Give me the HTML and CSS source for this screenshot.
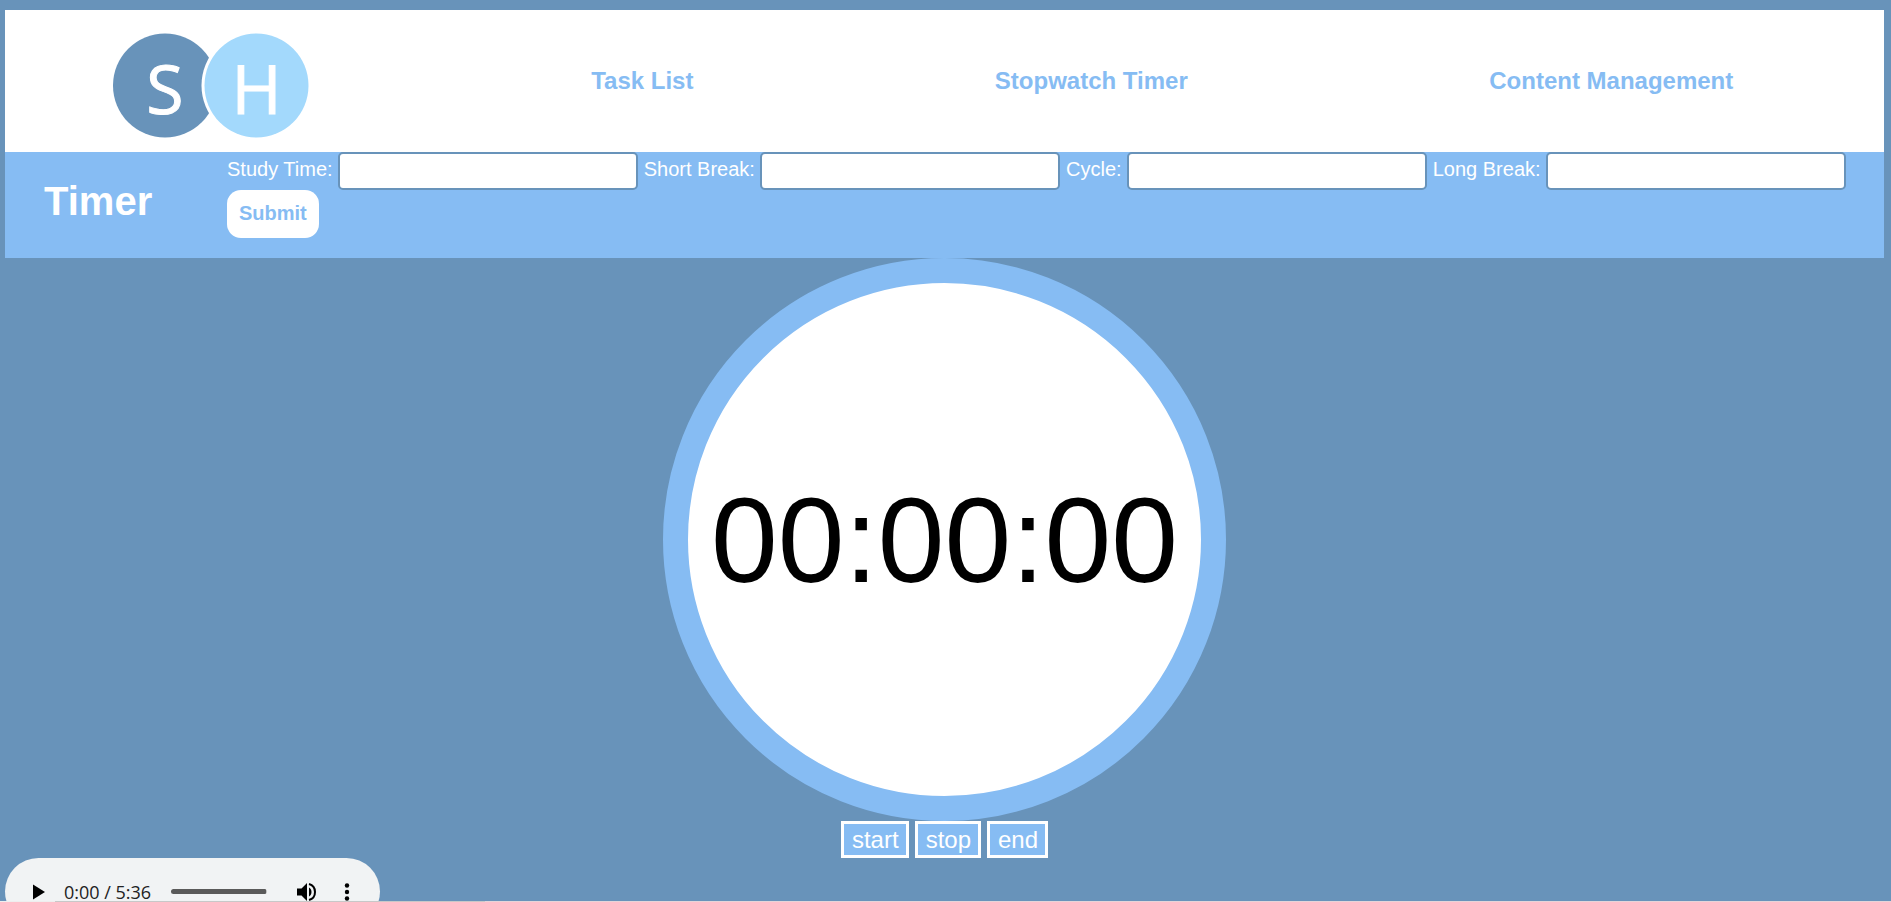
FILE: index.html
```html
<!DOCTYPE html>
<html lang="en">
<head>
<meta charset="utf-8">
<title>Timer</title>
<link rel="stylesheet" href="styles.css">
</head>
<body>
<header class="site-header">
  <svg class="logo" viewBox="0 0 196 142" role="img" aria-label="SH">
    <circle cx="52" cy="75.500" r="52" fill="#6893ba"/>
    <circle cx="143.500" cy="75.500" r="55" fill="#fff"/>
    <circle cx="143.500" cy="75.500" r="52" fill="#a3d9fc"/>
    <text class="logo-letter" x="52" y="104">S</text>
    <text class="logo-letter" x="143.500" y="104">H</text>
  </svg>
  <a class="nav-link" href="#tasks">Task List</a>
  <a class="nav-link" href="#timer">Stopwatch Timer</a>
  <a class="nav-link" href="#content">Content Management</a>
</header>
<section class="settings">
  <h1 class="title">Timer</h1>
  <form class="settings-form">
    <label for="study">Study Time:</label>
    <input class="field" id="study" type="text">
    <label for="short">Short Break:</label>
    <input class="field" id="short" type="text">
    <label for="cycle">Cycle:</label>
    <input class="field" id="cycle" type="text">
    <label for="long">Long Break:</label>
    <input class="field" id="long" type="text">
    <button class="submit" type="button">Submit</button>
  </form>
</section>
<main class="clock">
  <div class="dial"><span>00:00:00</span></div>
  <div class="controls">
    <button class="control" type="button">start</button>
    <button class="control" type="button">stop</button>
    <button class="control" type="button">end</button>
  </div>
</main>
<div class="player">
  <button class="icon-button" type="button" aria-label="Play">
    <svg width="12" height="16" viewBox="0 0 12 16"><path d="M0 .5v15L12 8z"/></svg>
  </button>
  <span class="time">0:00 / 5:36</span>
  <input class="seek" type="range" min="0" max="336" value="0" aria-label="Seek">
  <button class="icon-button volume" type="button" aria-label="Volume">
    <svg width="20" height="20" viewBox="0 0 20 20"><path d="M0 6.500v7h4.500L10 19V1L4.500 6.500z"/><path d="M12 5.500v9c1.500-.8 2.500-2.500 2.500-4.500S13.500 6.300 12 5.500z"/><path d="M12 2c3.700 1 6 4.300 6 8s-2.300 7-6 8" fill="none" stroke="#000" stroke-width="2"/></svg>
  </button>
  <button class="icon-button" type="button" aria-label="More options">
    <svg width="6" height="18" viewBox="0 0 6 18"><circle cx="3" cy="2.500" r="2.200"/><circle cx="3" cy="9" r="2.200"/><circle cx="3" cy="15.500" r="2.200"/></svg>
  </button>
</div>
</body>
</html>
```

FILE: styles.css
```css
html {
  background: #6893ba;
}

body {
  box-sizing: border-box;
  height: 100vh;
  margin: 0;
  padding: 10px 7px 0 5px;
  overflow: hidden;
  font-family: Arial, "Liberation Sans", sans-serif;
  font-size: 20px;
}

body::after {
  content: "";
  position: fixed;
  inset: auto 0 0 0;
  height: 1px;
  background: linear-gradient(90deg, #eee 55px, #c8c8c8 55px 485px, #e6d4d8 485px);
}

button {
  font-family: inherit;
}

.site-header {
  display: flex;
  align-items: center;
  justify-content: space-around;
  background: #fff;
}

.logo {
  width: 196px;
  margin: 0 -19px 0 -43px;
}

.logo-letter {
  font-family: "Open Sans", sans-serif;
  font-size: 68px;
  text-anchor: middle;
  fill: #fff;
  stroke: #fff;
  stroke-width: 1px;
}

.nav-link {
  color: #86bcf3;
  font-size: 24px;
  font-weight: bold;
  line-height: 28px;
  text-decoration: none;
}

.settings {
  display: flex;
  align-items: flex-start;
  background: #86bcf3;
  color: #fff;
}

.title {
  flex: none;
  box-sizing: border-box;
  width: 222px;
  margin: 26px 0 0;
  padding-left: 39px;
  font-size: 40px;
  line-height: 46px;
}

.settings-form {
  padding-bottom: 20px;
}

.field {
  box-sizing: border-box;
  width: 300px;
  height: 38px;
  margin: 0;
  border: 2px solid #6893ba;
  border-radius: 5px;
  background: #fff;
  font-family: inherit;
  font-size: 14px;
}

.submit {
  display: block;
  height: 48px;
  padding: 0 12px 2px;
  border: 0;
  border-radius: 14px;
  background: #fff;
  color: #86bcf3;
  font-size: 20px;
  font-weight: bold;
}

.clock {
  display: flex;
  flex-direction: column;
  align-items: center;
}

.dial {
  display: flex;
  align-items: center;
  justify-content: center;
  aspect-ratio: 1;
  padding: 23px;
  border: 25px solid #86bcf3;
  border-radius: 50%;
  background: #fff;
  color: #000;
  font-size: 120px;
}

.controls {
  display: flex;
  gap: 6px;
}

.control {
  height: 37px;
  padding: 0 7px 0 8px;
  border: 3px solid #fff;
  background: #86bcf3;
  color: #fff;
  font-size: 24px;
  line-height: 30px;
}

.player {
  display: flex;
  align-items: center;
  box-sizing: border-box;
  width: 375px;
  height: 67px;
  padding: 0 30px 0 28px;
  border-radius: 34px;
  background: #f1f3f4;
}

.icon-button {
  display: flex;
  padding: 0;
  border: 0;
  background: none;
}

.time {
  margin: 0 20px 0 19px;
  color: #222;
  font-family: "Open Sans", sans-serif;
  font-size: 18px;
  white-space: nowrap;
}

.seek {
  appearance: none;
  width: 96px;
  height: 5px;
  margin: 0;
  border-radius: 3px;
  background: linear-gradient(90deg, #5a5a5a 95px, #c0c0c0 95px);
}

.seek::-webkit-slider-thumb {
  appearance: none;
  width: 0;
  height: 0;
}

.volume {
  margin: 0 27px 0 auto;
}
```
